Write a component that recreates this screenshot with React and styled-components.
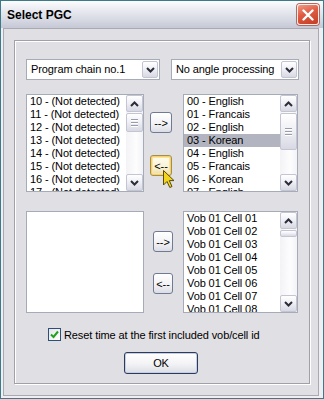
import React from 'react'
import styled, { createGlobalStyle, css } from 'styled-components'

const GlobalStyle = createGlobalStyle`
  html, body {
    margin: 0;
    padding: 0;
    background: #3b7a88;
  }
  body {
    font-family: 'Liberation Sans', Arial, sans-serif;
    font-size: 11px;
    letter-spacing: -0.1px;
    color: #000;
  }
  * { box-sizing: border-box; }
`

const Window = styled.div`
  position: relative;
  width: 324px;
  height: 399px;
  border: 1px solid #3b7a88;
  background: #efeff3;
  display: flex;
  flex-direction: column;
`

const TitleBar = styled.div`
  height: 27px;
  flex: none;
  display: flex;
  align-items: center;
  justify-content: space-between;
  padding: 0 4px 0 6px;
  background: linear-gradient(180deg, #fdfdfe 0%, #eeeff4 25%, #dcdee7 60%, #c5c8d5 100%);
`

const Title = styled.span`
  font-size: 12px;
  font-weight: bold;
  letter-spacing: 0;
  color: #000;
  padding-top: 1px;
`

const CloseButton = styled.div`
  width: 22px;
  height: 21px;
  border: 1px solid #f4f0f0;
  border-radius: 3px;
  box-shadow: 0 0 0 1px #b9675a;
  background: linear-gradient(160deg, #f09a84 0%, #de5a40 45%, #c23f28 100%);
  display: flex;
  align-items: center;
  justify-content: center;
`

const Client = styled.div`
  flex: 1;
  margin: 0 4px 2px 2px;
  border: 1px solid #a9a9b1;
  background: #e0dfe3;
  padding: 11px 8px 11px 10px;
  display: flex;
`

const GroupBox = styled.div`
  width: 296px;
  height: 344px;
  border: 1px solid #a0a0a6;
  box-shadow: inset 1px 1px 0 #fff, 1px 1px 0 #fff;
  padding: 18px 0 0 11px;
  display: flex;
  flex-direction: column;
`

const ComboRow = styled.div`
  display: flex;
  gap: 11px;
`

const Combo = styled.div`
  width: ${p => p.$w}px;
  height: 21px;
  border: 1px solid #a5acb8;
  background: #fff;
  display: flex;
  align-items: stretch;
  padding: 1px;
`

const ComboText = styled.div`
  flex: 1;
  padding-left: 3px;
  line-height: 17px;
  white-space: nowrap;
  overflow: hidden;
`

const arrowFace = css`
  border: 1px solid #c3c5d3;
  border-radius: 2px;
  background: linear-gradient(180deg, #ffffff 0%, #eeeff4 50%, #d7d8e2 100%);
  display: flex;
  align-items: center;
  justify-content: center;
`

const ComboButton = styled.div`
  ${arrowFace}
  width: 16px;
`

const ListRow = styled.div`
  display: flex;
  height: ${p => p.$h}px;
  margin-top: ${p => p.$mt}px;
`

const ListBox = styled.div`
  width: ${p => p.$w}px;
  height: 100%;
  border: 1px solid #a5acb8;
  background: #fff;
  display: flex;
  overflow: hidden;
`

const Items = styled.div`
  flex: 1;
  overflow: hidden;
`

const Item = styled.div`
  height: 13px;
  line-height: 13px;
  padding-left: 3px;
  white-space: nowrap;
  background: ${p => (p.$selected ? '#b2b4bf' : 'transparent')};
`

const ScrollBar = styled.div`
  width: 17px;
  flex: none;
  display: flex;
  flex-direction: column;
  background: linear-gradient(90deg, #f3f3f6, #fdfdfe 60%, #f3f3f6);
`

const ScrollArrow = styled.div`
  ${arrowFace}
  height: 17px;
  flex: none;
`

const Track = styled.div`
  flex: 1;
  padding-top: ${p => p.$top}px;
`

const Thumb = styled.div`
  ${arrowFace}
  height: ${p => p.$h}px;
  flex-direction: column;
  gap: 2px;
`

const Grip = styled.div`
  width: 7px;
  height: 1px;
  background: #9a9cac;
  box-shadow: 0 1px 0 #fff;
`

const Movers = styled.div`
  width: 39px;
  display: flex;
  flex-direction: column;
  padding-left: ${p => p.$pl}px;
  padding-top: ${p => p.$pt}px;
  gap: ${p => p.$gap}px;
`

const PushButton = styled.div`
  width: ${p => p.$w}px;
  height: ${p => p.$h}px;
  border: 1px solid #6f7b94;
  border-radius: 3px;
  background: linear-gradient(180deg, #ffffff 0%, #f3f3f6 55%, #dcdde5 100%);
  display: flex;
  align-items: center;
  justify-content: center;
  white-space: nowrap;
  ${p => p.$hover && css`
    border-color: #a48f4a;
    box-shadow: inset 0 0 0 1px #f7d06a, inset 0 0 0 2px #fbe3a0;
    background: linear-gradient(180deg, #fffdf0 0%, #f8f1d4 60%, #eadca6 100%);
  `}
  ${p => p.$default && css`
    border-color: #2a3b60;
    box-shadow: inset 0 0 0 1px #c9cde0;
  `}
`

const CheckRow = styled.div`
  display: flex;
  align-items: center;
  margin-top: 15px;
  padding-left: 22px;
  height: 13px;
`

const CheckBox = styled.div`
  width: 13px;
  height: 13px;
  border: 1px solid #2e4f78;
  background: linear-gradient(135deg, #e6e6ea, #ffffff);
  display: flex;
  align-items: center;
  justify-content: center;
`

const CheckLabel = styled.span`
  margin-left: 3px;
  white-space: nowrap;
`

const OkRow = styled.div`
  margin-top: 11px;
  padding-left: 98px;
`

const Cursor = styled.svg`
  position: absolute;
  left: 162px;
  top: 169px;
`

const Chevron = ({ up }) => (
  <svg width='9' height='6' viewBox='0 0 9 6'>
    <polyline
      points={up ? '1,5 4.5,1.5 8,5' : '1,1 4.5,4.5 8,1'}
      fill='none'
      stroke='#2c2c3a'
      strokeWidth='2'
    />
  </svg>
)

const Scroller = ({ top, h, grip }) => (
  <ScrollBar>
    <ScrollArrow><Chevron up /></ScrollArrow>
    <Track $top={top}>
      <Thumb $h={h}>
        {grip && <><Grip /><Grip /><Grip /></>}
      </Thumb>
    </Track>
    <ScrollArrow><Chevron /></ScrollArrow>
  </ScrollBar>
)

const pgcs = [10, 11, 12, 13, 14, 15, 16, 17, 18].map(n => `${n} - (Not detected)`)
const langs = ['00 - English', '01 - Francais', '02 - English', '03 - Korean', '04 - English', '05 - Francais', '06 - Korean', '07 - English']
const cells = ['01', '02', '03', '04', '05', '06', '07', '08', '09'].map(n => `Vob 01 Cell ${n}`)

export default function App () {
  return (
    <>
      <GlobalStyle />
      <Window>
        <TitleBar>
          <Title>Select PGC</Title>
          <CloseButton>
            <svg width='12' height='12' viewBox='0 0 12 12'>
              <path d='M1.5 1.5 L10.5 10.5 M10.5 1.5 L1.5 10.5' stroke='#fff' strokeWidth='2.4' strokeLinecap='round' />
            </svg>
          </CloseButton>
        </TitleBar>
        <Client>
          <GroupBox>
            <ComboRow>
              <Combo $w={134}>
                <ComboText>Program chain no.1</ComboText>
                <ComboButton><Chevron /></ComboButton>
              </Combo>
              <Combo $w={128}>
                <ComboText>No angle processing</ComboText>
                <ComboButton><Chevron /></ComboButton>
              </Combo>
            </ComboRow>

            <ListRow $h={98} $mt={14}>
              <ListBox $w={118}>
                <Items>{pgcs.map(t => <Item key={t}>{t}</Item>)}</Items>
                <Scroller top={1} h={19} grip />
              </ListBox>
              <Movers $pl={6} $pt={18} $gap={22}>
                <PushButton $w={22} $h={21}>--&gt;</PushButton>
                <PushButton $w={22} $h={21} $hover>&lt;--</PushButton>
              </Movers>
              <ListBox $w={115}>
                <Items>
                  {langs.map(t => <Item key={t} $selected={t === '03 - Korean'}>{t}</Item>)}
                </Items>
                <Scroller top={1} h={37} grip />
              </ListBox>
            </ListRow>

            <ListRow $h={102} $mt={19}>
              <ListBox $w={118} />
              <Movers $pl={9} $pt={20} $gap={21}>
                <PushButton $w={20} $h={21}>--&gt;</PushButton>
                <PushButton $w={20} $h={21}>&lt;--</PushButton>
              </Movers>
              <ListBox $w={115}>
                <Items>{cells.map(t => <Item key={t}>{t}</Item>)}</Items>
                <Scroller top={1} h={7} />
              </ListBox>
            </ListRow>

            <CheckRow>
              <CheckBox>
                <svg width='9' height='9' viewBox='0 0 9 9'>
                  <path d='M1 4.5 L3.5 7 L8 1.5' fill='none' stroke='#21a121' strokeWidth='2' />
                </svg>
              </CheckBox>
              <CheckLabel>Reset time at the first included vob/cell id</CheckLabel>
            </CheckRow>

            <OkRow>
              <PushButton $w={74} $h={22} $default>OK</PushButton>
            </OkRow>
          </GroupBox>
        </Client>
        <Cursor width='13' height='19' viewBox='0 0 13 19'>
          <path d='M0.5 0.5 L0.5 15 L4 11.5 L6.8 17.5 L9 16.5 L6.3 10.6 L11 10.6 Z' fill='#f2d41e' stroke='#5b4b05' strokeWidth='1' strokeLinejoin='round' />
        </Cursor>
      </Window>
    </>
  )
}
